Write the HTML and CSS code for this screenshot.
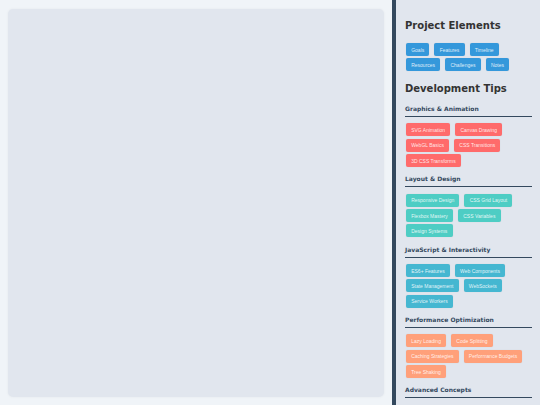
FILE: index.html
```html
<!DOCTYPE html>
<html lang="en">
<head>
    <meta charset="UTF-8">
    <title>Project Elements</title>
    <link rel="stylesheet" href="styles.css">
</head>
<body>
<div class="app">
    <div class="stage-wrap">
        <div class="stage"></div>
    </div>
    <div class="sidebar">
        <h2>Project Elements</h2>
        <div class="tags">
            <button class="tag blue">Goals</button>
            <button class="tag blue">Features</button>
            <button class="tag blue">Timeline</button>
            <button class="tag blue">Resources</button>
            <button class="tag blue">Challenges</button>
            <button class="tag blue">Notes</button>
        </div>

        <h2>Development Tips</h2>

        <h3>Graphics &amp; Animation</h3>
        <div class="tags">
            <button class="tag red">SVG Animation</button>
            <button class="tag red">Canvas Drawing</button>
            <button class="tag red">WebGL Basics</button>
            <button class="tag red">CSS Transitions</button>
            <button class="tag red">3D CSS Transforms</button>
        </div>

        <h3>Layout &amp; Design</h3>
        <div class="tags">
            <button class="tag teal">Responsive Design</button>
            <button class="tag teal">CSS Grid Layout</button>
            <button class="tag teal">Flexbox Mastery</button>
            <button class="tag teal">CSS Variables</button>
            <button class="tag teal">Design Systems</button>
        </div>

        <h3>JavaScript &amp; Interactivity</h3>
        <div class="tags">
            <button class="tag sky">ES6+ Features</button>
            <button class="tag sky">Web Components</button>
            <button class="tag sky">State Management</button>
            <button class="tag sky">WebSockets</button>
            <button class="tag sky">Service Workers</button>
        </div>

        <h3>Performance Optimization</h3>
        <div class="tags">
            <button class="tag salmon">Lazy Loading</button>
            <button class="tag salmon">Code Splitting</button>
            <button class="tag salmon">Caching Strategies</button>
            <button class="tag salmon">Performance Budgets</button>
            <button class="tag salmon">Tree Shaking</button>
        </div>

        <h3>Advanced Concepts</h3>
    </div>
</div>
</body>
</html>
```

FILE: styles.css
```css
html, body {
    margin: 0;
    height: 100%;
    overflow: hidden;
}
body {
    font-family: "DejaVu Sans", sans-serif;
    background-color: #f0f4f8;
}
.app {
    display: flex;
    height: 405px;
}
.stage-wrap {
    flex: 1;
    padding: 9px 8px 8px 8px;
}
.stage {
    height: 100%;
    background-color: #e1e6ee;
    border-radius: 5px;
    box-shadow: 0 0 3px rgba(0, 0, 0, 0.05);
}
.sidebar {
    box-sizing: border-box;
    width: 148px;
    flex: none;
    padding: 10px 8px 0 9px;
    border-left: 4px solid #34495e;
    background-color: #e1e6ee;
    overflow: hidden;
}
h2 {
    margin: 9px 0 9px;
    font-size: 10px;
    line-height: 14px;
    color: #333;
}
h3 {
    margin: 0 0 5.5px;
    padding-bottom: 3px;
    font-size: 6px;
    line-height: 8px;
    color: #34495e;
    border-bottom: 1px solid #34495e;
}
.tags {
    display: flex;
    flex-wrap: wrap;
    margin-bottom: 6.7px;
}
.tag {
    margin: 1px 4px 1.4px 1px;
    padding: 0 5.2px;
    height: 13px;
    border: 0;
    border-radius: 2px;
    font-family: "Liberation Sans", sans-serif;
    font-size: 5px;
    color: rgba(255, 255, 255, 0.85);
    box-shadow: 0 0 1px rgba(0, 0, 0, 0.15);
}
.blue { background-color: #3498db; }
.red { background-color: #ff6b6b; }
.teal { background-color: #4ecdc4; }
.sky { background-color: #45b7d1; }
.salmon { background-color: #ffa07a; }
```
